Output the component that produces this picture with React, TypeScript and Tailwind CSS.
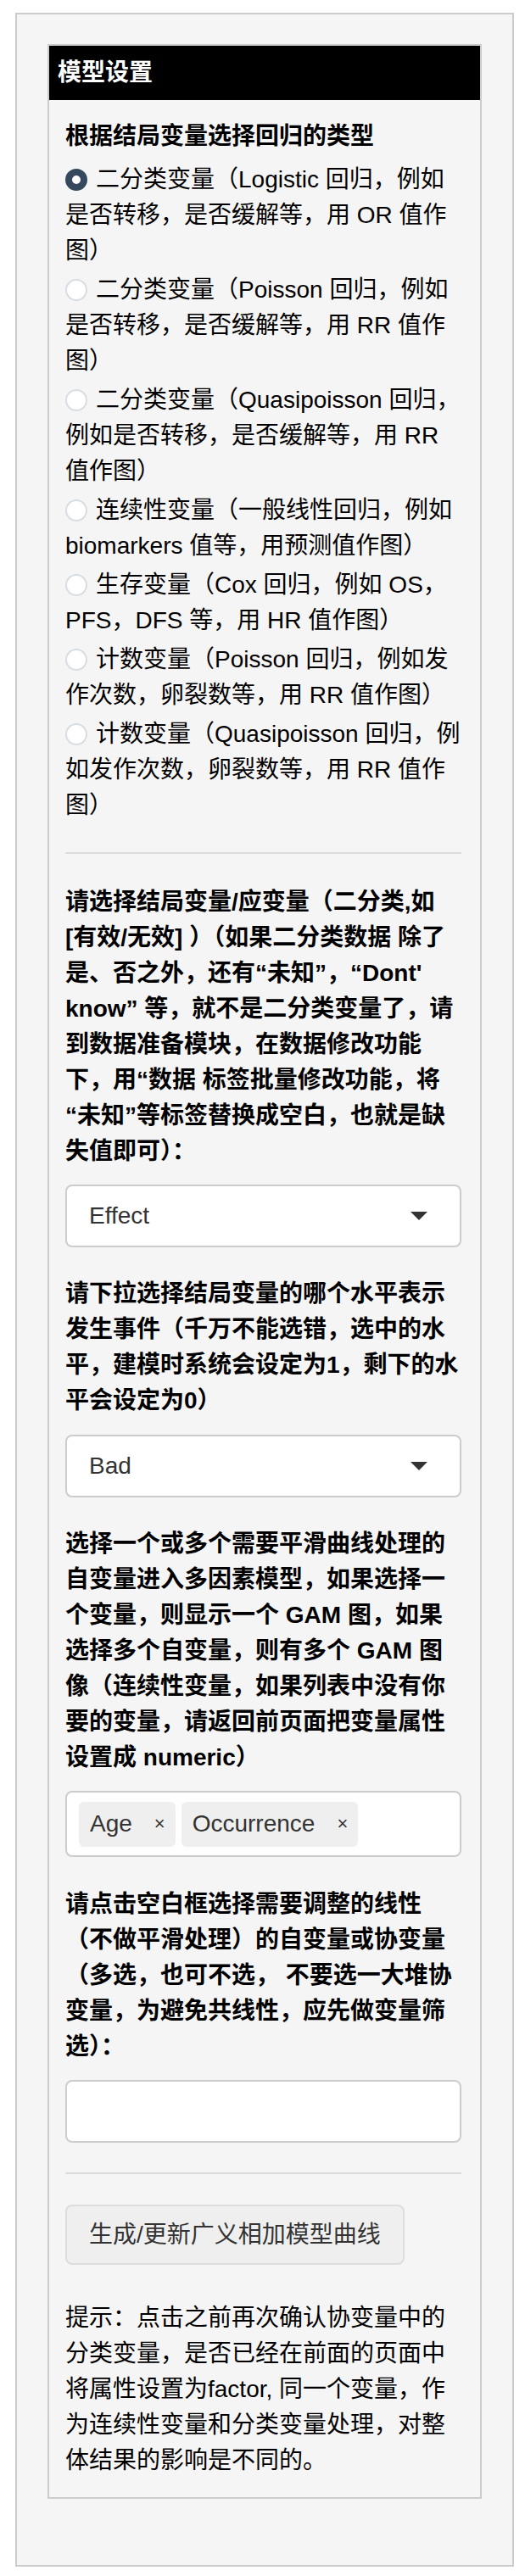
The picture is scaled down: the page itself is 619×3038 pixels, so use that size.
import React from "react";

const radios: { lines: string[]; checked?: boolean }[] = [
  {
    checked: true,
    lines: ["二分类变量（Logistic 回归，例如", "是否转移，是否缓解等，用 OR 值作", "图）"],
  },
  { lines: ["二分类变量（Poisson 回归，例如", "是否转移，是否缓解等，用 RR 值作", "图）"] },
  { lines: ["二分类变量（Quasipoisson 回归，", "例如是否转移，是否缓解等，用 RR", "值作图）"] },
  { lines: ["连续性变量（一般线性回归，例如", "biomarkers 值等，用预测值作图）"] },
  { lines: ["生存变量（Cox 回归，例如 OS，", "PFS，DFS 等，用 HR 值作图）"] },
  { lines: ["计数变量（Poisson 回归，例如发", "作次数，卵裂数等，用 RR 值作图）"] },
  { lines: ["计数变量（Quasipoisson 回归，例", "如发作次数，卵裂数等，用 RR 值作", "图）"] },
];

const p1 = [
  "请选择结局变量/应变量（二分类,如",
  "[有效/无效] ）（如果二分类数据 除了",
  "是、否之外，还有“未知”，“Dont'",
  "know” 等，就不是二分类变量了，请",
  "到数据准备模块，在数据修改功能",
  "下，用“数据 标签批量修改功能，将",
  "“未知”等标签替换成空白，也就是缺",
  "失值即可）：",
];
const p2 = [
  "请下拉选择结局变量的哪个水平表示",
  "发生事件（千万不能选错，选中的水",
  "平，建模时系统会设定为1，剩下的水",
  "平会设定为0）",
];
const p3 = [
  "选择一个或多个需要平滑曲线处理的",
  "自变量进入多因素模型，如果选择一",
  "个变量，则显示一个 GAM 图，如果",
  "选择多个自变量，则有多个 GAM 图",
  "像（连续性变量，如果列表中没有你",
  "要的变量，请返回前页面把变量属性",
  "设置成 numeric）",
];
const p4 = [
  "请点击空白框选择需要调整的线性",
  "（不做平滑处理）的自变量或协变量",
  "（多选，也可不选， 不要选一大堆协",
  "变量，为避免共线性，应先做变量筛",
  "选）：",
];
const p5 = [
  "提示：点击之前再次确认协变量中的",
  "分类变量，是否已经在前面的页面中",
  "将属性设置为factor, 同一个变量，作",
  "为连续性变量和分类变量处理，对整",
  "体结果的影响是不同的。",
];

function Lines({ lines, bold }: { lines: string[]; bold?: boolean }) {
  return (
    <div className={bold ? "font-bold text-[#000]" : "text-[#000]"}>
      {lines.map((l, i) => (
        <div key={i} className="whitespace-pre">
          {l}
        </div>
      ))}
    </div>
  );
}

function Select({ value }: { value: string }) {
  return (
    <div className="flex h-[74px] w-full items-center justify-between rounded-[8px] border-2 border-[#ccc] bg-white pl-[26px] pr-[38px]">
      <span className="text-[#333]">{value}</span>
      <span className="h-0 w-0 border-x-[10px] border-t-[10px] border-x-transparent border-t-[#333]" />
    </div>
  );
}

function Tag({ label }: { label: string }) {
  return (
    <div className="flex h-[53px] items-center rounded-[6px] bg-[#efefef] pl-[13px] pr-[12px] text-[#333]">
      <span>{label}</span>
      <span className="ml-[26px] text-[22px]">×</span>
    </div>
  );
}

export default function App() {
  return (
    <div className="min-h-[3038px] bg-white pt-[15px] font-['Liberation_Sans','Noto_Sans_CJK_SC',sans-serif] text-[28px] leading-[42px]">
      <div className="ml-[18px] w-[588px] border-2 border-[#ccc] bg-[#f5f5f5] px-[36px] pb-[78px] pt-[35px]">
        <div className="border-2 border-[#ccc] bg-[#f5f5f5]">
          <div className="flex h-[64px] items-center bg-black pl-[10px] font-bold text-white">模型设置</div>
          <div className="pb-[22px] pl-[19px] pr-[22px] pt-[22px]">
            <div className="font-bold text-[#000]">根据结局变量选择回归的类型</div>
            <div className="mt-[9px] flex flex-col gap-[4px]">
              {radios.map((r, i) => (
                <div key={i} className="text-[#000]">
                  {r.lines.map((l, j) => (
                    <div key={j} className="whitespace-pre">
                      {j === 0 &&
                        (r.checked ? (
                          <span className="mr-[10px] inline-block h-[26px] w-[26px] rounded-full border-[8px] border-[#34495e] bg-white align-[-4px]" />
                        ) : (
                          <span className="mr-[10px] inline-block h-[26px] w-[26px] rounded-full border-2 border-[#d8dde3] bg-white align-[-4px]" />
                        ))}
                      {l}
                    </div>
                  ))}
                </div>
              ))}
            </div>
            <div className="mb-[36px] mt-[34px] h-[2px] bg-[#dcdcdc]" />
            <Lines lines={p1} bold />
            <div className="mt-[18px]">
              <Select value="Effect" />
            </div>
            <div className="mt-[34px]">
              <Lines lines={p2} bold />
            </div>
            <div className="mt-[19px]">
              <Select value="Bad" />
            </div>
            <div className="mt-[34px]">
              <Lines lines={p3} bold />
            </div>
            <div className="mt-[18px] flex h-[78px] w-full items-center gap-[7px] rounded-[8px] border-2 border-[#ccc] bg-white pl-[14px]">
              <Tag label="Age" />
              <Tag label="Occurrence" />
            </div>
            <div className="mt-[35px]">
              <Lines lines={p4} bold />
            </div>
            <div className="mt-[18px] h-[74px] w-full rounded-[8px] border-2 border-[#ccc] bg-white" />
            <div className="mb-[36px] mt-[35px] h-[2px] bg-[#dcdcdc]" />
            <button className="flex h-[71px] items-center rounded-[8px] border-2 border-[#ddd] bg-[#efefef] px-[26px] text-[#333]">
              生成/更新广义相加模型曲线
            </button>
            <div className="mt-[42px]">
              <Lines lines={p5} />
            </div>
          </div>
        </div>
      </div>
    </div>
  );
}
